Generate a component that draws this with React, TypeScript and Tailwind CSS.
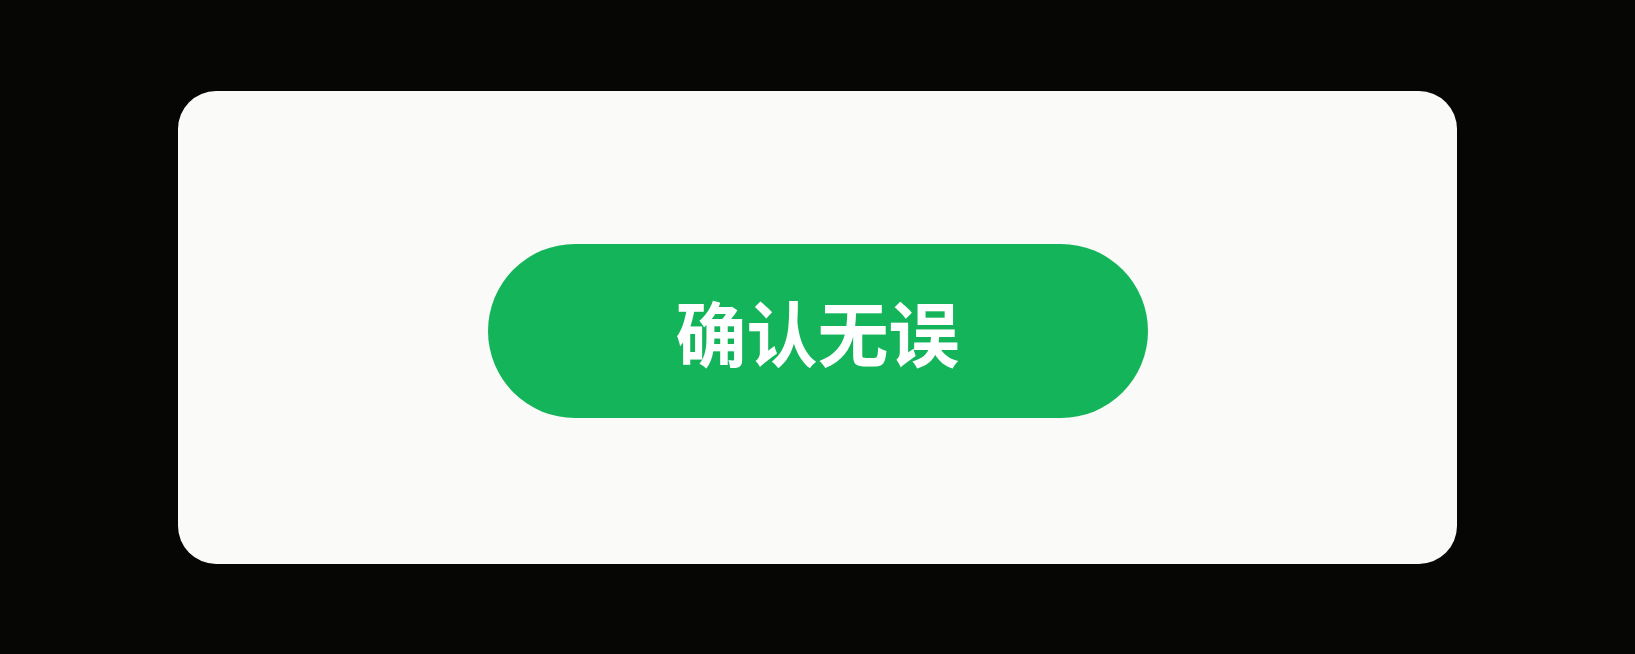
import React from 'react';

const App: React.FC = () => {
  return (
    <div className="w-[1635px] h-[654px] bg-[#060604] flex items-center justify-center">
      {/* Card */}
      <div className="w-[1279px] h-[473px] bg-[#fafaf8] rounded-[38px] flex items-center justify-center">
        <button
          type="button"
          className="mt-[7px] w-[660px] h-[174px] rounded-full bg-[#14b45a] text-white text-[71px] font-bold leading-none flex items-center justify-center"
          style={{ fontFamily: '"Noto Sans CJK SC", "Noto Sans", sans-serif' }}
        >
          确认无误
        </button>
      </div>
    </div>
  );
};

export default App;
